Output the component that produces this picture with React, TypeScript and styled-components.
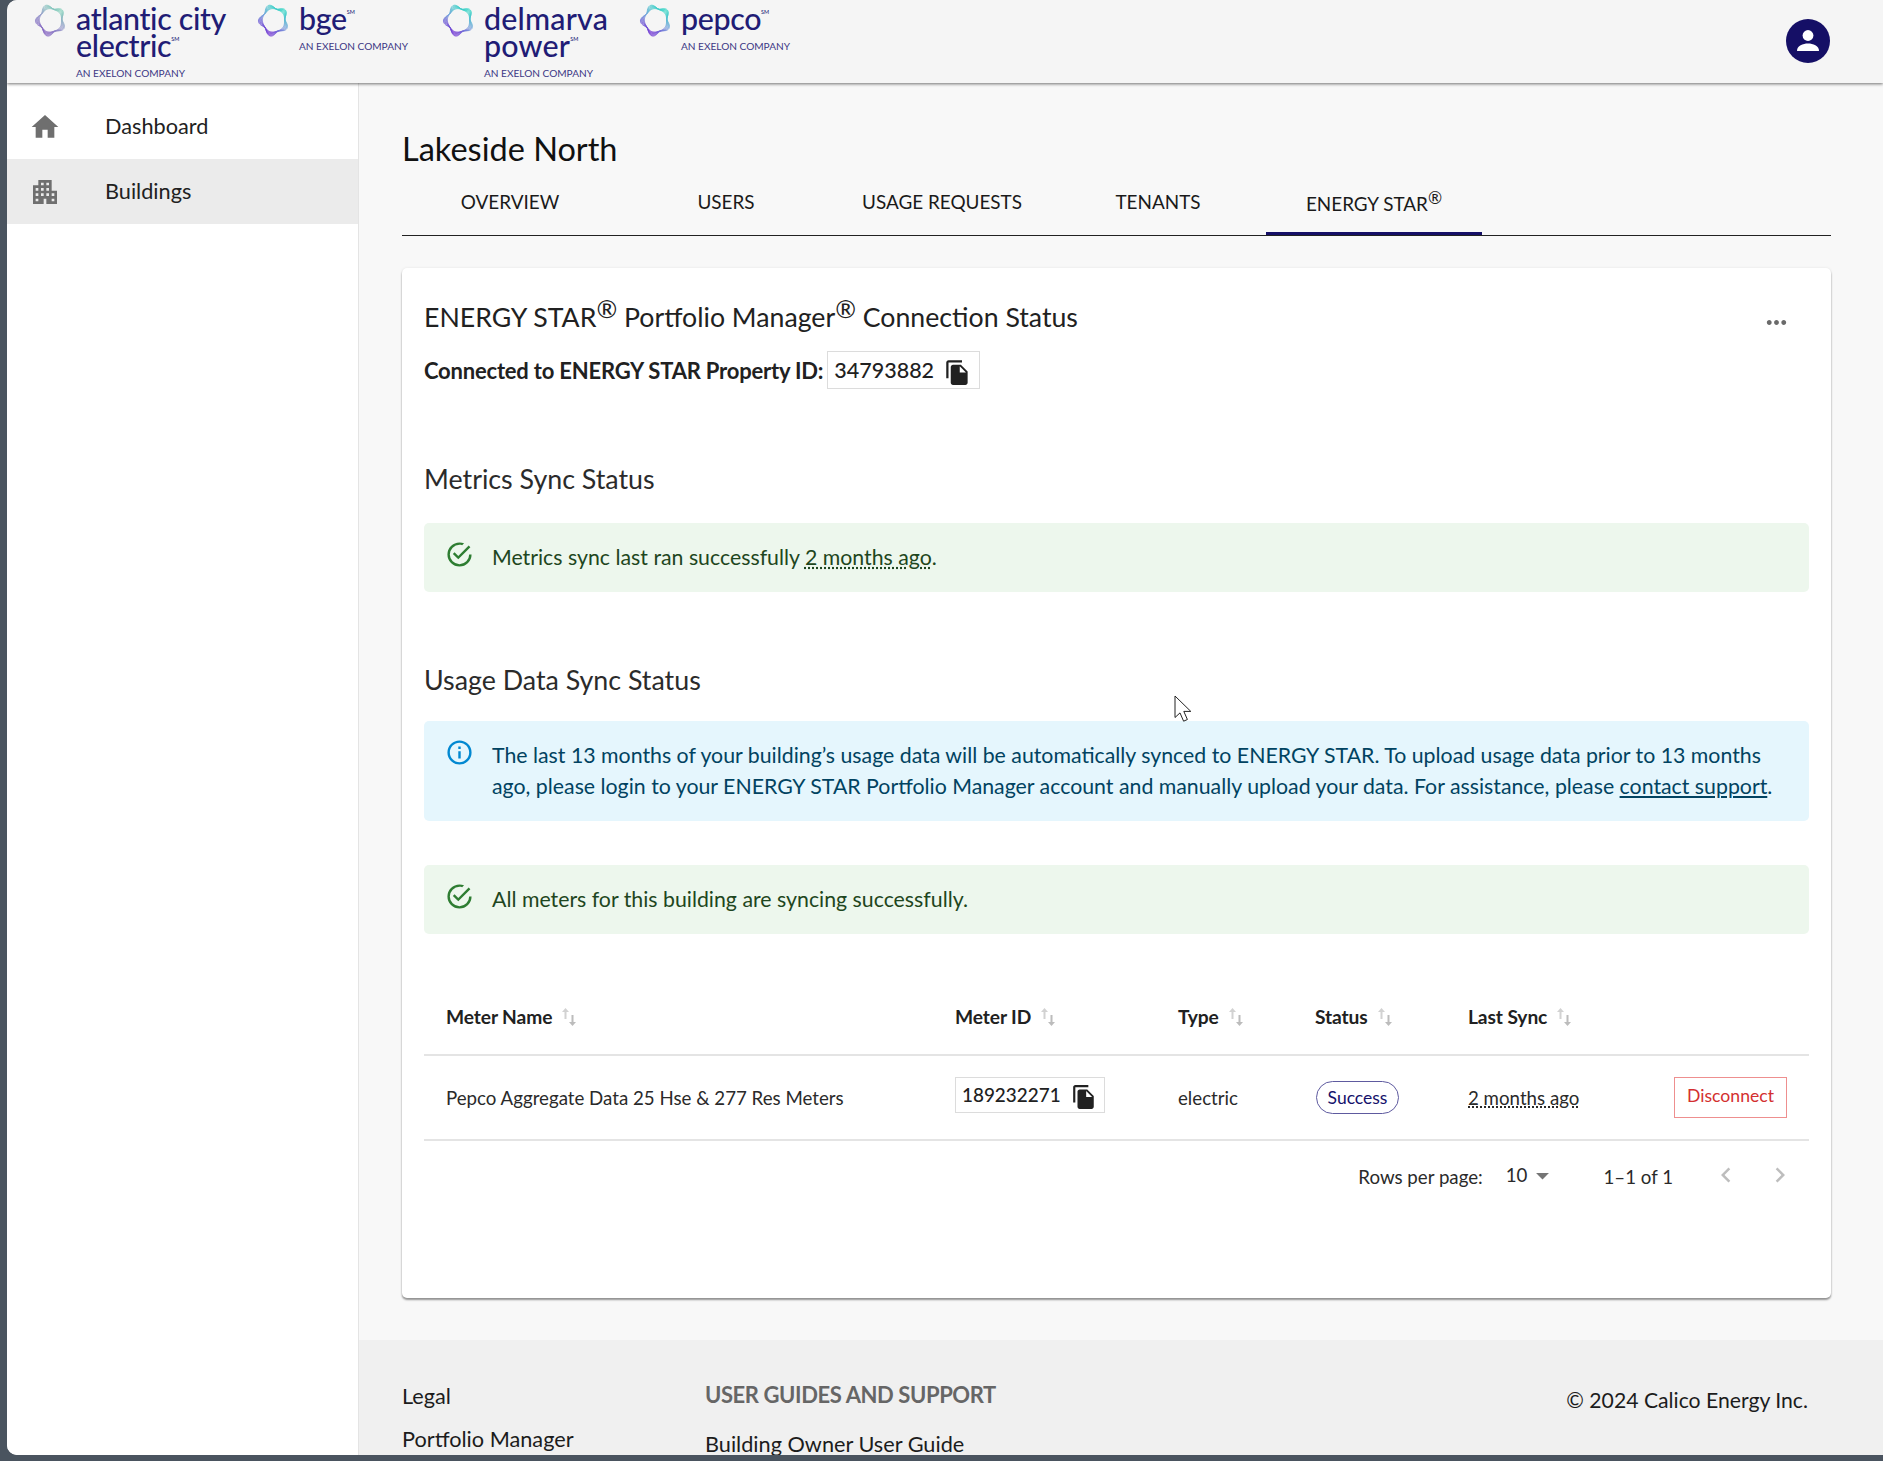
import React from "react";
import styled, { createGlobalStyle } from "styled-components";

const GlobalStyle = createGlobalStyle`
  html, body {
    margin: 0;
    padding: 0;
    background: #4a545f;
  }
  body {
    font-family: Lato, "Liberation Sans", sans-serif;
    color: #212121;
  }
  * { box-sizing: border-box; }
`;

const Desktop = styled.div`
  width: 1883px;
  height: 1461px;
  overflow: hidden;
  position: relative;
  background: #4a545f;
  padding: 0 0 6px 7px;
`;

const Win = styled.div`
  height: 100%;
  background: #fff;
  border-radius: 10px 0 0 10px;
  overflow: hidden;
  display: flex;
  flex-direction: column;
`;

const Header = styled.header`
  flex: 0 0 83px;
  height: 83px;
  background: #f5f5f5;
  box-shadow: 0 1px 3px rgba(0, 0, 0, 0.55);
  position: relative;
  z-index: 2;
  display: flex;
  align-items: flex-start;
  padding-left: 27px;
`;

const Logo = styled.div<{ $w: number }>`
  width: ${(p) => p.$w}px;
  flex: 0 0 ${(p) => p.$w}px;
  display: flex;
  gap: 8px;
`;

const LogoText = styled.div`
  display: flex;
  flex-direction: column;
  padding-top: 5px;
  color: #211c75;
`;

const LogoName = styled.div<{ $track?: number }>`
  font-size: 30.4px;
  line-height: 27px;
  font-weight: 500;
  letter-spacing: ${(p) => p.$track ?? -0.35}px;
  white-space: pre-line;
  sup {
    font-size: 5.5px;
    line-height: 0;
    vertical-align: 16px;
    letter-spacing: 0;
  }
`;

const LogoSub = styled.div`
  font-size: 10.1px;
  line-height: 12px;
  margin-top: 8px;
  color: #3c3784;
  white-space: nowrap;
`;

const Avatar = styled.div`
  margin-left: auto;
  margin-top: 19px;
  margin-right: 53px;
  width: 44px;
  height: 44px;
  border-radius: 50%;
  background: #150f66;
  display: flex;
  align-items: center;
  justify-content: center;
`;

const Body = styled.div`
  flex: 1;
  display: flex;
  min-height: 0;
`;

const Sidebar = styled.nav`
  flex: 0 0 352px;
  background: #fff;
  border-right: 1px solid #e4e4e4;
  padding-top: 11px;
`;

const NavItem = styled.div<{ $active?: boolean }>`
  height: 65px;
  display: flex;
  align-items: center;
  padding-left: 22px;
  gap: 44px;
  font-size: 21.7px;
  color: #212121;
  background: ${(p) => (p.$active ? "#ebebeb" : "transparent")};
  svg { fill: #6f6f6f; flex: none; }
  span { margin-bottom: 2px; }
`;

const Right = styled.div`
  flex: 1;
  min-width: 0;
  display: flex;
  flex-direction: column;
  background: #f8f8f8;
`;

const Content = styled.main`
  padding: 47px 52px 42px 43px;
`;

const Title = styled.h1`
  margin: 0;
  font-size: 32.5px;
  line-height: 38px;
  font-weight: 400;
  color: #111;
`;

const Tabs = styled.div`
  margin-top: 8px;
  height: 60px;
  display: flex;
  border-bottom: 1px solid #222;
`;

const Tab = styled.div<{ $active?: boolean }>`
  width: 216px;
  display: flex;
  align-items: center;
  justify-content: center;
  padding-bottom: ${(p) => (p.$active ? "2px" : "5px")};
  font-size: 18.9px;
  color: #1a1a1a;
  border-bottom: 3px solid ${(p) => (p.$active ? "#150f66" : "transparent")};
  white-space: pre;
  sup {
    font-size: 17px;
    line-height: 0;
    vertical-align: 7px;
  }
`;

const Card = styled.section`
  margin-top: 32px;
  background: #fff;
  border-radius: 5px;
  box-shadow: 0 2px 2px rgba(0, 0, 0, 0.4), 0 0 3px rgba(0, 0, 0, 0.08);
  padding: 33px 22px 86px;
  position: relative;
`;

const CardTitle = styled.h2`
  margin: 0;
  font-size: 26.7px;
  line-height: 32px;
  font-weight: 400;
  color: #212121;
  sup {
    font-size: 25px;
    line-height: 0;
    vertical-align: 9px;
  }
`;

const MoreButton = styled.div`
  position: absolute;
  top: 40px;
  right: 40px;
  width: 29px;
  height: 29px;
  svg { fill: #6a6a6a; display: block; }
`;

const ConnectedRow = styled.div`
  margin-top: 18px;
  display: flex;
  align-items: center;
  gap: 4px;
  font-size: 22px;
  font-weight: 700;
  letter-spacing: -0.2px;
  color: #212121;
`;

const CopyBox = styled.span<{ $small?: boolean }>`
  display: inline-flex;
  align-items: center;
  border: 1px solid #dcdcdc;
  height: ${(p) => (p.$small ? 36 : 38)}px;
  margin-bottom: ${(p) => (p.$small ? 6 : 0)}px;
  padding: 0 ${(p) => (p.$small ? 7 : 8)}px 0 6px;
  gap: 10px;
  font-size: ${(p) => (p.$small ? 18.9 : 21.5)}px;
  font-weight: 500;
  letter-spacing: 0;
  color: #212121;
  white-space: nowrap;
  svg { fill: #212121; flex: none; margin-top: 4px; }
`;

const SectionTitle = styled.h3<{ $top: number }>`
  margin: ${(p) => p.$top}px 0 0;
  font-size: 26.8px;
  line-height: 30px;
  font-weight: 400;
  color: #2b2b2b;
`;

const Alert = styled.div<{ $kind: "success" | "info"; $top: number }>`
  margin-top: ${(p) => p.$top}px;
  display: flex;
  gap: 18px;
  padding: 19px 20px 19px 21px;
  border-radius: 5px;
  font-size: 21.3px;
  line-height: 31px;
  background: ${(p) => (p.$kind === "success" ? "#edf7ed" : "#e5f6fd")};
  color: ${(p) => (p.$kind === "success" ? "#1e4620" : "#014361")};
  svg {
    flex: none;
    margin-top: -2px;
    fill: ${(p) => (p.$kind === "success" ? "#2e7d32" : "#0288d1")};
  }
  a { color: inherit; text-decoration: underline; }
`;

const TimeAgo = styled.span`
  text-decoration: underline dotted;
  text-underline-offset: 2px;
`;

const Table = styled.table`
  margin-top: 45px;
  width: 100%;
  table-layout: fixed;
  border-collapse: collapse;
`;

const Th = styled.th<{ $w?: number }>`
  width: ${(p) => (p.$w ? `${p.$w}px` : "auto")};
  height: 76px;
  padding: 0 0 0 22px;
  text-align: left;
  font-size: 19.2px;
  font-weight: 700;
  letter-spacing: -0.1px;
  color: #212121;
  border-bottom: 2px solid #e4e4e4;
`;

const SortLabel = styled.span`
  display: inline-flex;
  align-items: center;
  gap: 10px;
  svg { flex: none; }
`;

const Td = styled.td`
  height: 85px;
  padding: 0 0 0 22px;
  font-size: 18.7px;
  color: #2a2a2a;
  border-bottom: 2px solid #e4e4e4;
`;

const Pill = styled.span`
  display: inline-flex;
  align-items: center;
  justify-content: center;
  width: 83px;
  height: 33px;
  margin: -1px 0 0 1px;
  border: 1px solid #5e5a9f;
  border-radius: 17px;
  font-size: 17.5px;
  color: #15116b;
`;

const Disconnect = styled.button`
  width: 113px;
  height: 41px;
  padding: 0 0 3px;
  background: #fff;
  border: 1px solid #ee8f8f;
  border-radius: 0;
  font-family: inherit;
  font-size: 17.6px;
  color: #d32f2f;
  margin-top: -1px;
`;

const Pager = styled.div`
  height: 71px;
  display: flex;
  align-items: center;
  justify-content: flex-end;
  font-size: 18.7px;
  color: #2a2a2a;
  padding-right: 14px;
`;

const RowsSelect = styled.span`
  display: inline-flex;
  align-items: center;
  margin-left: 23px;
  margin-bottom: 3px;
  svg { fill: #757575; }
`;

const PageRange = styled.span`
  margin-left: 45px;
  margin-right: 38px;
`;

const PageArrow = styled.span`
  display: inline-flex;
  width: 30px;
  height: 30px;
  margin-bottom: 3px;
  svg { fill: #bdbdbd; }
  & + & { margin-left: 24px; }
`;

const Footer = styled.footer`
  flex: 1;
  background: #f0f0f0;
  padding: 44px 75px 0 43px;
  display: flex;
  font-size: 21.7px;
  color: #1c1c1c;
`;

const FooterCol = styled.div<{ $w: number }>`
  flex: 0 0 ${(p) => p.$w}px;
  display: flex;
  flex-direction: column;
`;

const FooterLink = styled.div<{ $top?: number }>`
  line-height: 24px;
  margin-top: ${(p) => p.$top ?? 0}px;
  white-space: nowrap;
`;

const FooterHead = styled.div`
  line-height: 24px;
  margin-top: -1px;
  font-size: 22px;
  font-weight: 700;
  letter-spacing: -0.4px;
  color: #666;
  white-space: nowrap;
`;

const Copyright = styled.div`
  margin-left: auto;
  line-height: 24px;
  margin-top: 4px;
  font-size: 21.2px;
  white-space: nowrap;
`;

const Cursor = styled.svg`
  position: absolute;
  left: 1174px;
  top: 695px;
  z-index: 5;
`;

/* the exelon ring: a few wobbly loops fanning out from the hole */
const ringPath = (k: number) => {
  const pts: string[] = [];
  for (let i = 0; i <= 90; i++) {
    const t = (i / 90) * Math.PI * 2;
    const r =
      11.6 +
      k * 0.45 +
      (0.3 + k * 0.36) * Math.cos(5 * t + 2.88 + k * 0.12) +
      0.5 * Math.sin(t - 0.6);
    pts.push(`${(17 + r * 0.96 * Math.cos(t)).toFixed(2)} ${(17 + r * Math.sin(t)).toFixed(2)}`);
  }
  return `M${pts.join("L")}Z`;
};

const Ring = ({ id, faint }: { id: string; faint?: boolean }) => (
  <svg width="34" height="34" viewBox="0 0 34 34" fill="none" style={{ flex: "none", marginTop: 3 }}>
    <defs>
      <linearGradient id={id} x1="0.8" y1="0" x2="0.25" y2="1">
        <stop offset="0" stopColor={faint ? "#7fd6b8" : "#24dcc0"} />
        <stop offset="0.5" stopColor={faint ? "#9aa0cc" : "#79a6dc"} />
        <stop offset="1" stopColor={faint ? "#7d55bd" : "#6a1fd0"} />
      </linearGradient>
    </defs>
    {[0, 1, 2, 3, 4, 5].map((k) => (
      <path key={k} d={ringPath(k)} stroke={`url(#${id})`} strokeWidth="0.8" />
    ))}
  </svg>
);

const Icon = ({ d, size = 29 }: { d: string; size?: number }) => (
  <svg width={size} height={size} viewBox="0 0 24 24" aria-hidden="true">
    <path d={d} />
  </svg>
);

const homePath = "M10 20v-6h4v6h5v-8h3L12 3 2 12h3v8z";
const buildingPath =
  "M17 11V3H7v4H3v14h8v-4h2v4h8V11h-4zM7 19H5v-2h2v2zm0-4H5v-2h2v2zm0-4H5V9h2v2zm4 4H9v-2h2v2zm0-4H9V9h2v2zm0-4H9V5h2v2zm4 8h-2v-2h2v2zm0-4h-2V9h2v2zm0-4h-2V5h2v2zm4 12h-2v-2h2v2zm0-4h-2v-2h2v2z";
const copyPath =
  "M16 1H4c-1.1 0-2 .9-2 2v14h2V3h12V1zm-1 4 6 6v10c0 1.1-.9 2-2 2H7.99C6.89 23 6 22.1 6 21l.01-14c0-1.1.89-2 1.99-2h7zm-1 7h5.5L14 6.5V12z";
const successPath =
  "M20,12A8,8 0 0,1 12,20A8,8 0 0,1 4,12A8,8 0 0,1 12,4C12.76,4 13.5,4.11 14.2,4.31L15.77,2.74C14.61,2.26 13.34,2 12,2A10,10 0 0,0 2,12A10,10 0 0,0 12,22A10,10 0 0,0 22,12M7.91,10.08L6.5,11.5L11,16L21,6L19.59,4.58L11,13.17L7.91,10.08Z";
const infoPath =
  "M11,9H13V7H11M12,20C7.59,20 4,16.41 4,12C4,7.59 7.59,4 12,4C16.41,4 20,7.59 20,12C20,16.41 16.41,20 12,20M12,2A10,10 0 0,0 2,12A10,10 0 0,0 12,22A10,10 0 0,0 22,12A10,10 0 0,0 12,2M11,17H13V11H11V17Z";
const morePath =
  "M6 10c-1.1 0-2 .9-2 2s.9 2 2 2 2-.9 2-2-.9-2-2-2zm12 0c-1.1 0-2 .9-2 2s.9 2 2 2 2-.9 2-2-.9-2-2-2zm-6 0c-1.1 0-2 .9-2 2s.9 2 2 2 2-.9 2-2-.9-2-2-2z";

const SortIcon = () => (
  <svg width="14" height="18" viewBox="0 0 14 18" aria-hidden="true">
    <path d="M3.500 0 7 4H4.500v7h-2V4H0z" fill="#d2d2d2" />
    <path d="M10.500 18 7 14h2.500V7h2v7H14z" fill="#bcbcbc" />
  </svg>
);

const SM = () => <sup>SM</sup>;

const columns = [
  { label: "Meter Name", w: 509 },
  { label: "Meter ID", w: 223 },
  { label: "Type", w: 137 },
  { label: "Status", w: 153 },
  { label: "Last Sync", w: 206 },
];

export default function App() {
  return (
    <Desktop>
      <GlobalStyle />
      <Win>
        <Header>
          <Logo $w={223}>
            <Ring id="r1" faint />
            <LogoText>
              <LogoName>
                atlantic city{"\n"}electric
                <SM />
              </LogoName>
              <LogoSub>AN EXELON COMPANY</LogoSub>
            </LogoText>
          </Logo>
          <Logo $w={185}>
            <Ring id="r2" />
            <LogoText>
              <LogoName>
                bge
                <SM />
              </LogoName>
              <LogoSub>AN EXELON COMPANY</LogoSub>
            </LogoText>
          </Logo>
          <Logo $w={197}>
            <Ring id="r3" />
            <LogoText>
              <LogoName $track={0.2}>
                delmarva{"\n"}power
                <SM />
              </LogoName>
              <LogoSub>AN EXELON COMPANY</LogoSub>
            </LogoText>
          </Logo>
          <Logo $w={200}>
            <Ring id="r4" />
            <LogoText>
              <LogoName>
                pepco
                <SM />
              </LogoName>
              <LogoSub>AN EXELON COMPANY</LogoSub>
            </LogoText>
          </Logo>
          <Avatar>
            <svg width="30" height="30" viewBox="0 0 30 30" aria-hidden="true">
              <circle cx="15" cy="9.500" r="5.400" fill="#fff" />
              <path d="M4 25c0-5.200 6-7.400 11-7.400S26 19.800 26 25z" fill="#fff" />
            </svg>
          </Avatar>
        </Header>
        <Body>
          <Sidebar>
            <NavItem>
              <Icon d={homePath} size={32} />
              <span>Dashboard</span>
            </NavItem>
            <NavItem $active>
              <Icon d={buildingPath} size={32} />
              <span>Buildings</span>
            </NavItem>
          </Sidebar>
          <Right>
            <Content>
              <Title>Lakeside North</Title>
              <Tabs>
                <Tab>OVERVIEW</Tab>
                <Tab>USERS</Tab>
                <Tab>USAGE REQUESTS</Tab>
                <Tab>TENANTS</Tab>
                <Tab $active>
                  <span>
                    ENERGY STAR<sup>®</sup>
                  </span>
                </Tab>
              </Tabs>
              <Card>
                <CardTitle>
                  ENERGY STAR<sup>®</sup> Portfolio Manager<sup>®</sup> Connection Status
                </CardTitle>
                <MoreButton>
                  <Icon d={morePath} />
                </MoreButton>
                <ConnectedRow>
                  Connected to ENERGY STAR Property ID:
                  <CopyBox>
                    34793882
                    <Icon d={copyPath} size={27} />
                  </CopyBox>
                </ConnectedRow>
                <SectionTitle $top={75}>Metrics Sync Status</SectionTitle>
                <Alert $kind="success" $top={29}>
                  <Icon d={successPath} />
                  <div>
                    Metrics sync last ran successfully <TimeAgo>2 months ago</TimeAgo>.
                  </div>
                </Alert>
                <SectionTitle $top={73}>Usage Data Sync Status</SectionTitle>
                <Alert $kind="info" $top={26}>
                  <Icon d={infoPath} />
                  <div>
                    The last 13 months of your building’s usage data will be automatically synced to ENERGY STAR. To upload usage data prior to 13 months ago, please login to your ENERGY STAR Portfolio Manager account and manually upload your data. For assistance, please <a href="#support">contact support</a>.
                  </div>
                </Alert>
                <Alert $kind="success" $top={44}>
                  <Icon d={successPath} />
                  <div>All meters for this building are syncing successfully.</div>
                </Alert>
                <Table>
                  <thead>
                    <tr>
                      {columns.map((c) => (
                        <Th key={c.label} $w={c.w}>
                          <SortLabel>
                            {c.label}
                            <SortIcon />
                          </SortLabel>
                        </Th>
                      ))}
                      <Th />
                    </tr>
                  </thead>
                  <tbody>
                    <tr>
                      <Td>Pepco Aggregate Data 25 Hse &amp; 277 Res Meters</Td>
                      <Td>
                        <CopyBox $small>
                          189232271
                          <Icon d={copyPath} size={26} />
                        </CopyBox>
                      </Td>
                      <Td>electric</Td>
                      <Td>
                        <Pill>Success</Pill>
                      </Td>
                      <Td>
                        <TimeAgo>2 months ago</TimeAgo>
                      </Td>
                      <Td>
                        <Disconnect>Disconnect</Disconnect>
                      </Td>
                    </tr>
                  </tbody>
                </Table>
                <Pager>
                  Rows per page:
                  <RowsSelect>
                    10
                    <Icon d="M7 10l5 5 5-5z" size={31} />
                  </RowsSelect>
                  <PageRange>1–1 of 1</PageRange>
                  <PageArrow>
                    <Icon d="M15.41 7.41 14 6l-6 6 6 6 1.41-1.41L10.83 12z" size={30} />
                  </PageArrow>
                  <PageArrow>
                    <Icon d="M10 6 8.59 7.41 13.17 12l-4.58 4.58L10 18l6-6z" size={30} />
                  </PageArrow>
                </Pager>
              </Card>
            </Content>
            <Footer>
              <FooterCol $w={303}>
                <FooterLink>Legal</FooterLink>
                <FooterLink $top={19}>Portfolio Manager</FooterLink>
              </FooterCol>
              <FooterCol $w={400}>
                <FooterHead>USER GUIDES AND SUPPORT</FooterHead>
                <FooterLink $top={25}>Building Owner User Guide</FooterLink>
              </FooterCol>
              <Copyright>© 2024 Calico Energy Inc.</Copyright>
            </Footer>
          </Right>
        </Body>
      </Win>
      <Cursor width="19" height="28" viewBox="0 0 19 28" aria-hidden="true">
        <path d="M1 1v21.500l5-4.600 3.600 8.300 3.800-1.700-3.600-8.100h7z" fill="#fff" stroke="#222" strokeWidth="1" />
      </Cursor>
    </Desktop>
  );
}
